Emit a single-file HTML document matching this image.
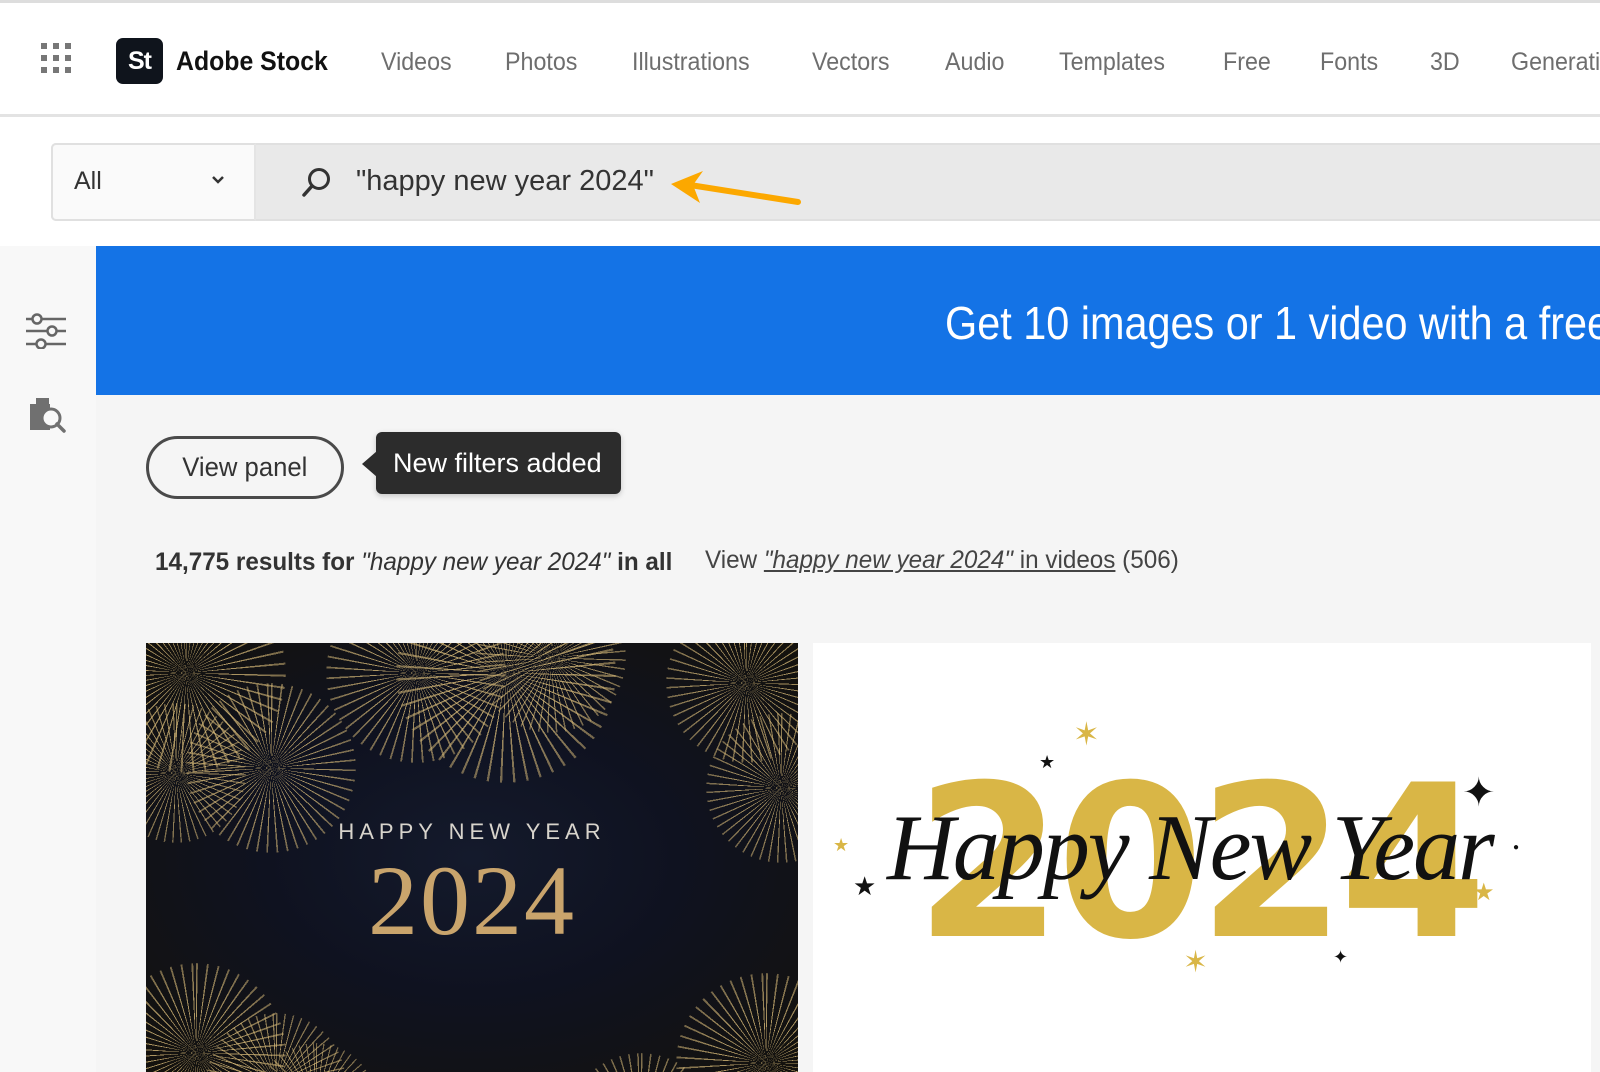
<!DOCTYPE html>
<html><head><meta charset="utf-8"><style>
*{margin:0;padding:0;box-sizing:border-box}
html,body{width:1600px;height:1072px;overflow:hidden}
body{background:#f5f5f5;font-family:"Liberation Sans",sans-serif;position:relative}
.abs{position:absolute;white-space:nowrap}
.nav{position:absolute;left:0;top:0;width:1600px;height:117px;background:#fff;border-top:3px solid #ddd;border-bottom:3px solid #e3e3e3;overflow:hidden}
.nav .it{position:absolute;top:45px;font-size:25px;color:#6e6e6e;transform:scaleX(.93);transform-origin:left;white-space:nowrap}
.sb{position:absolute;left:0;top:117px;width:1600px;height:129px;background:#fff;overflow:hidden}
.fw{position:absolute;border-radius:50%;background:repeating-conic-gradient(rgba(214,185,120,.85) 0deg 1.2deg,transparent 1.2deg 7deg);-webkit-mask:radial-gradient(circle,rgba(0,0,0,.7) 0%,#000 25%,rgba(0,0,0,.6) 70%,transparent 72%);mask:radial-gradient(circle,rgba(0,0,0,.7) 0%,#000 25%,rgba(0,0,0,.6) 70%,transparent 72%)}
.star{position:absolute;font-size:26px;line-height:1}
</style></head><body>
<div class="nav">
 <svg class="abs" style="left:41px;top:40px" width="32" height="32"><g fill="#777"><rect x="0" y="0" width="6" height="6"/><rect x="12" y="0" width="6" height="6"/><rect x="24" y="0" width="6" height="6"/><rect x="0" y="12" width="6" height="6"/><rect x="12" y="12" width="6" height="6"/><rect x="24" y="12" width="6" height="6"/><rect x="0" y="24" width="6" height="6"/><rect x="12" y="24" width="6" height="6"/><rect x="24" y="24" width="6" height="6"/></g></svg>
 <div class="abs" style="left:116px;top:35px;width:47px;height:46px;background:#0f141c;border-radius:7px;color:#fff;font-weight:bold;font-size:25px;line-height:46px;text-align:center;letter-spacing:-1px">St</div>
 <div class="abs" style="left:176px;top:43px;font-size:27px;font-weight:bold;color:#111;transform:scaleX(.92);transform-origin:left">Adobe Stock</div>
 <div class="it" style="left:381px">Videos</div>
 <div class="it" style="left:505px">Photos</div>
 <div class="it" style="left:632px">Illustrations</div>
 <div class="it" style="left:812px">Vectors</div>
 <div class="it" style="left:945px">Audio</div>
 <div class="it" style="left:1059px">Templates</div>
 <div class="it" style="left:1223px">Free</div>
 <div class="it" style="left:1320px">Fonts</div>
 <div class="it" style="left:1430px">3D</div>
 <div class="it" style="left:1511px">Generative AI</div>
</div>
<div class="sb">
 <div class="abs" style="left:51px;top:26px;width:1600px;height:78px;background:#e9e9e9;border:2px solid #e0e0e0;border-radius:5px"></div>
 <div class="abs" style="left:51px;top:26px;width:205px;height:78px;background:#fafafa;border:2px solid #e0e0e0;border-right:2px solid #e4e4e4;border-radius:5px 0 0 5px"></div>
 <div class="abs" style="left:74px;top:50px;font-size:25px;color:#333">All</div>
 <svg class="abs" style="left:211px;top:58px" width="14" height="10"><path d="M2 2 L7 7 L12 2" stroke="#333" stroke-width="2.5" fill="none"/></svg>
 <svg class="abs" style="left:300px;top:49px" width="34" height="34"><circle cx="19" cy="13" r="9.5" stroke="#333" stroke-width="3" fill="none"/><path d="M12 20 L4 29" stroke="#333" stroke-width="3.5" stroke-linecap="round"/></svg>
 <div class="abs" style="left:356px;top:48px;font-size:29px;color:#333">"happy new year 2024"</div>
 <svg class="abs" style="left:660px;top:40px" width="150" height="50"><path d="M30 28 L138 45" stroke="#fca800" stroke-width="6" stroke-linecap="round"/><path d="M11 27 L43 14 L33 28 L40 46 Z" fill="#fca800"/></svg>
</div>
<div class="abs" style="left:0;top:246px;width:96px;height:826px;background:#f8f8f8"></div>
<div class="abs" style="left:96px;top:246px;width:1504px;height:149px;background:#1473e6;overflow:hidden"><div class="abs" style="left:849px;top:50px;font-size:46px;color:#fff;transform:scaleX(.9);transform-origin:left">Get 10 images or 1 video with a free trial</div></div>
<svg class="abs" style="left:25px;top:313px" width="42" height="36"><g stroke="#666" stroke-width="2.5" fill="#f8f8f8"><path d="M1 6H41M1 18H41M1 31H41"/><circle cx="12" cy="6" r="4.5"/><circle cx="27" cy="18" r="4.5"/><circle cx="16" cy="31" r="4.5"/></g></svg>
<svg class="abs" style="left:29px;top:396px" width="38" height="38"><rect x="1" y="8" width="20" height="26" fill="#707070"/><rect x="7" y="2" width="13" height="8" fill="#707070"/><circle cx="22" cy="22" r="9" stroke="#707070" stroke-width="3" fill="#f8f8f8"/><path d="M28 28L35 35" stroke="#707070" stroke-width="3.5" stroke-linecap="round"/></svg>
<div class="abs" style="left:146px;top:436px;width:198px;height:63px;border:3px solid #4a4a4a;border-radius:32px;font-size:27px;color:#333;text-align:center;line-height:57px"><span style="display:inline-block;transform:scaleX(.95)">View panel</span></div>
<div class="abs" style="left:376px;top:432px;width:245px;height:62px;background:#2c2c2c;border-radius:6px;box-shadow:0 2px 6px rgba(0,0,0,.2)"></div>
<div class="abs" style="left:362px;top:451px;width:0;height:0;border-top:13px solid transparent;border-bottom:13px solid transparent;border-right:15px solid #2c2c2c"></div>
<div class="abs" style="left:393px;top:448px;font-size:27px;color:#fff">New filters added</div>
<div class="abs" style="left:155px;top:548px;font-size:25px;color:#333;transform:scaleX(.97);transform-origin:left"><b>14,775 results for </b><i>"happy new year 2024"</i><b> in all</b></div>
<div class="abs" style="left:705px;top:546px;font-size:25px;color:#444;transform:scaleX(.97);transform-origin:left">View <u><i>"happy new year 2024"</i> in videos</u> (506)</div>
<div class="abs" style="left:146px;top:643px;width:652px;height:429px;overflow:hidden;background:radial-gradient(ellipse at 50% 50%,#141a2c 0%,#0f1220 45%,#14120d 100%)">
 <div class="fw" style="left:-60px;top:-70px;width:200px;height:200px"></div>
 <div class="fw" style="left:40px;top:40px;width:170px;height:170px"></div>
 <div class="fw" style="left:-40px;top:60px;width:140px;height:140px"></div>
 <div class="fw" style="left:180px;top:-60px;width:180px;height:180px"></div>
 <div class="fw" style="left:250px;top:-80px;width:220px;height:220px"></div>
 <div class="fw" style="left:330px;top:-60px;width:150px;height:150px"></div>
 <div class="fw" style="left:520px;top:-40px;width:160px;height:160px"></div>
 <div class="fw" style="left:560px;top:70px;width:150px;height:150px"></div>
 <div class="fw" style="left:-40px;top:320px;width:180px;height:180px"></div>
 <div class="fw" style="left:60px;top:370px;width:140px;height:140px"></div>
 <div class="fw" style="left:110px;top:400px;width:120px;height:120px"></div>
 <div class="fw" style="left:420px;top:410px;width:150px;height:150px"></div>
 <div class="fw" style="left:530px;top:330px;width:180px;height:180px"></div>
 <div class="abs" style="left:0;width:652px;top:176px;text-align:center;font-size:22px;letter-spacing:5px;color:#d8d4cc">HAPPY NEW YEAR</div>
 <div class="abs" style="left:0;width:652px;top:200px;text-align:center;font-family:'Liberation Serif',serif;font-size:100px;color:#c9a46c;letter-spacing:2px">2024</div>
</div>
<div class="abs" style="left:813px;top:643px;width:778px;height:429px;background:#fff;overflow:hidden">
 <div class="abs" style="left:102px;top:114px;font-family:'DejaVu Sans',sans-serif;font-weight:bold;font-size:212px;line-height:212px;color:#d9b646;letter-spacing:-6px">2024</div>
 <div class="abs" style="left:74px;top:150px;font-family:'Liberation Serif',serif;font-style:italic;font-size:94px;line-height:110px;color:#111;letter-spacing:-2px">Happy New Year</div>
 <div class="star" style="left:40px;top:230px;color:#111">★</div>
 <div class="star" style="left:20px;top:193px;color:#d9b646;font-size:18px">★</div>
 <div class="star" style="left:226px;top:110px;color:#111;font-size:18px">★</div>
 <div class="star" style="left:260px;top:75px;color:#d9b646;font-size:32px">✶</div>
 <div class="star" style="left:649px;top:130px;color:#111;font-size:40px">✦</div>
 <div class="star" style="left:660px;top:238px;color:#d9b646;font-size:24px">★</div>
 <div class="star" style="left:700px;top:200px;color:#111;font-size:10px">●</div>
 <div class="star" style="left:370px;top:305px;color:#d9b646;font-size:30px">✶</div>
 <div class="star" style="left:520px;top:305px;color:#111;font-size:18px">✦</div>
</div>
</body></html>
